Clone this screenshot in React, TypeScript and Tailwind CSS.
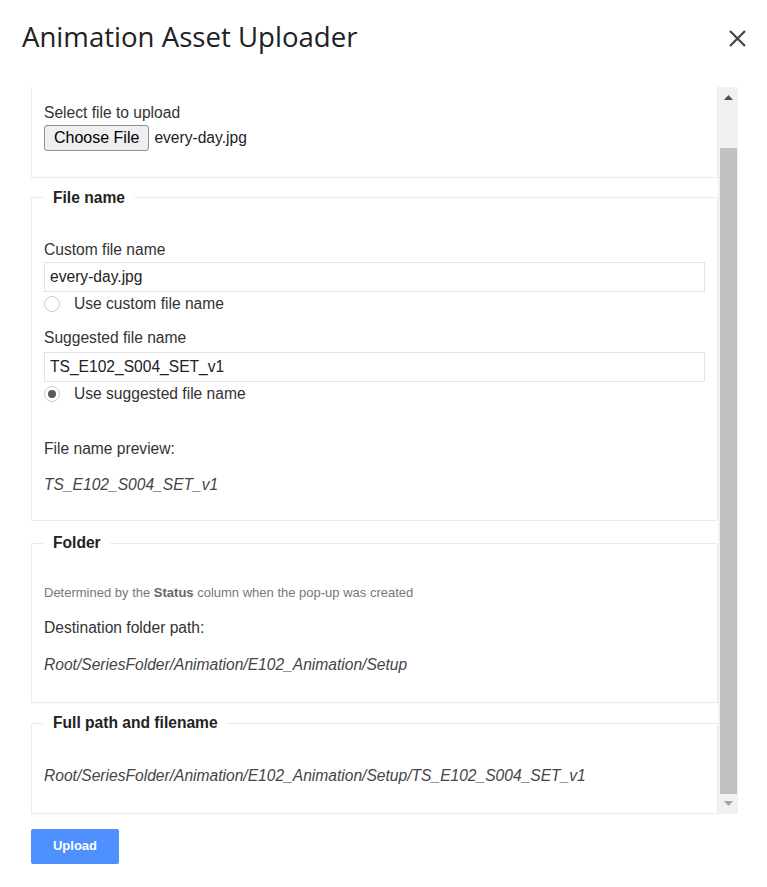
import * as React from 'react';

function Radio({ checked }: { checked?: boolean }) {
  return (
    <span className="flex h-4 w-4 shrink-0 items-center justify-center rounded-full border border-[#cdcdcd] bg-white">
      {checked && <span className="h-[8px] w-[8px] rounded-full bg-[#5a5a5a]" />}
    </span>
  );
}

function Section({
  title,
  className,
  children,
}: {
  title: string;
  className: string;
  children: React.ReactNode;
}) {
  return (
    <fieldset className={`border border-[#ececec] px-[12px] ${className}`}>
      <legend className="px-[9px] text-[15.6px] font-bold leading-[18px] text-[#222]">{title}</legend>
      {children}
    </fieldset>
  );
}

function TextBox({ value }: { value: string }) {
  return (
    <input
      readOnly
      value={value}
      className="block h-[30px] w-full border border-[#e3e3e3] px-[5px] text-[15.6px] text-[#222] outline-none"
    />
  );
}

export default function App() {
  return (
    <div className="min-h-screen bg-white font-['Liberation_Sans',Arial,sans-serif] text-[#333]">
      <div className="flex h-[87px] items-start justify-between pl-[22px] pr-[20px]">
        <h1 className="pt-[17px] font-['Open_Sans',sans-serif] text-[27.6px] font-normal leading-[38px] text-[#202124]">
          Animation Asset Uploader
        </h1>
        <button className="mt-[29px] text-[#444]" aria-label="Close">
          <svg width="19" height="19" viewBox="0 0 19 19" fill="none" stroke="currentColor" strokeWidth="2.2">
            <path d="M2 2 L17 17 M17 2 L2 17" />
          </svg>
        </button>
      </div>

      <div className="ml-[31px] mr-[29px] flex">
        <div className="min-w-0 flex-1">
          <div className="border-x border-b border-[#ececec] px-[12px] pb-[26px] pt-[16.5px]">
            <p className="text-[15.6px] leading-[18px]">Select file to upload</p>
            <div className="mt-[3px] flex items-center">
              <button className="h-[26px] rounded-[3px] border border-[#8f8f8f] bg-[#efefef] px-[9px] text-[16px] leading-none text-black">
                Choose File
              </button>
              <span className="ml-[5px] text-[15.6px] text-[#222]">every-day.jpg</span>
            </div>
          </div>

          <Section title="File name" className="mt-[11px] pb-[26px] pt-[34.5px]">
            <p className="text-[15.6px] leading-[18px]">Custom file name</p>
            <div className="mt-[3px]">
              <TextBox value="every-day.jpg" />
            </div>
            <label className="flex h-[24px] items-center gap-[14px] text-[15.6px]">
              <Radio />
              Use custom file name
            </label>
            <p className="mt-[13px] text-[15.6px] leading-[18px]">Suggested file name</p>
            <div className="mt-[5px]">
              <TextBox value="TS_E102_S004_SET_v1" />
            </div>
            <label className="flex h-[24px] items-center gap-[14px] text-[15.6px]">
              <Radio checked />
              Use suggested file name
            </label>
            <p className="mt-[34px] text-[15.6px] leading-[18px]">File name preview:</p>
            <p className="mt-[18px] text-[15.6px] italic leading-[18px] text-[#444]">TS_E102_S004_SET_v1</p>
          </Section>

          <Section title="Folder" className="mt-[13px] pb-[28px] pt-[32.5px]">
            <p className="text-[13px] leading-[15px] text-[#777]">
              Determined by the <span className="font-bold text-[#666]">Status</span> column when the pop-up was created
            </p>
            <p className="mt-[19.5px] text-[15.6px] leading-[18px]">Destination folder path:</p>
            <p className="mt-[19px] text-[15.6px] italic leading-[18px] text-[#444]">
              Root/SeriesFolder/Animation/E102_Animation/Setup
            </p>
          </Section>

          <Section title="Full path and filename" className="mt-[11px] pb-[28px] pt-[34.5px]">
            <p className="text-[15.6px] italic leading-[18px] text-[#444]">
              Root/SeriesFolder/Animation/E102_Animation/Setup/TS_E102_S004_SET_v1
            </p>
          </Section>
        </div>

        <div className="flex w-[20px] flex-col bg-[#f1f1f1]">
          <div className="flex h-[61px] justify-center pt-[8px]">
            <svg width="9" height="5" viewBox="0 0 9 5">
              <polygon points="0,5 4.5,0 9,5" fill="#505050" />
            </svg>
          </div>
          <div className="ml-[2px] mr-[1px] flex-1 bg-[#c1c1c1]" />
          <div className="flex h-[20px] items-center justify-center">
            <svg width="9" height="5" viewBox="0 0 9 5">
              <polygon points="0,0 9,0 4.5,5" fill="#a3a3a3" />
            </svg>
          </div>
        </div>
      </div>

      <button className="ml-[31px] mt-[15px] h-[35px] w-[88px] rounded-[2px] bg-[#4d90fe] text-[13px] font-bold text-white">
        Upload
      </button>
    </div>
  );
}
